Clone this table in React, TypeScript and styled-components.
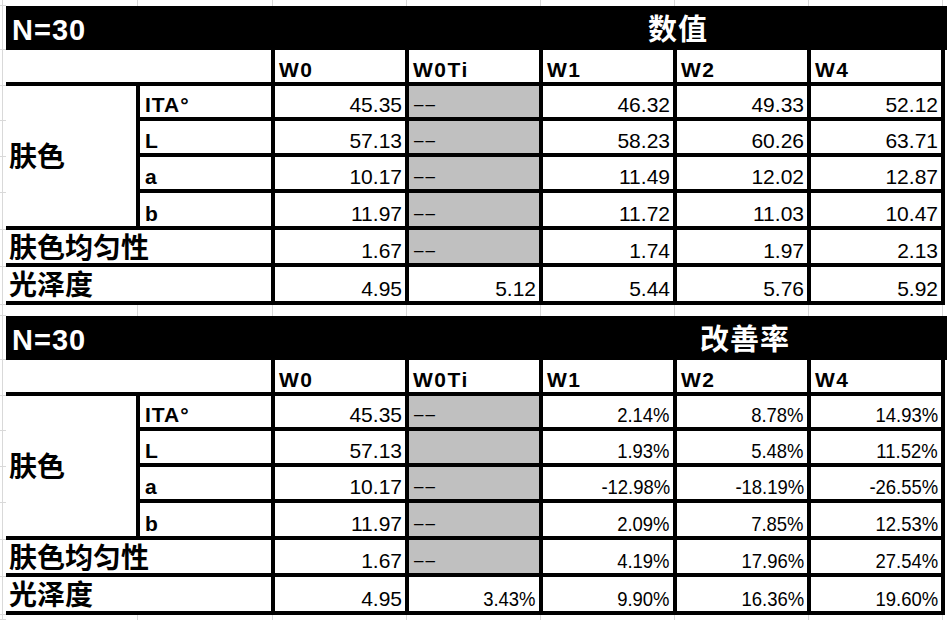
import React from 'react';
import styled, { createGlobalStyle } from 'styled-components';

const GlobalStyle = createGlobalStyle`
  *, *::before, *::after { box-sizing: border-box; }
  html, body { margin: 0; padding: 0; background: #ffffff; }
  body {
    font-family: "Liberation Sans", "Noto Sans CJK SC", sans-serif;
    color: #000000;
  }
`;

const COLS = '6px 134px 135px 134px 134px 134px 134px 134px 2px';
const GRID = '#d9d9d9';
const LINE = '4px solid #000000';

const Page = styled.div`
  width: 947px;
  height: 620px;
  overflow: hidden;
  display: flex;
  flex-direction: column;
  background: #ffffff;
`;

const Strip = styled.div<{ $h: number }>`
  display: grid;
  grid-template-columns: ${COLS};
  height: ${(p) => p.$h}px;
  flex: none;
`;

const StripCell = styled.div`
  background: linear-gradient(
    to left,
    transparent 2px,
    ${GRID} 2px,
    ${GRID} 3px,
    transparent 3px
  );
`;

const Gutter = styled.div`
  background: linear-gradient(
    to right,
    transparent 2px,
    ${GRID} 2px,
    ${GRID} 3px,
    transparent 3px
  );
  box-shadow: inset 0 -1px 0 ${GRID};
`;

const EndCell = styled.div`
  background: #ffffff;
`;

const Sheet = styled.div`
  display: grid;
  grid-template-columns: ${COLS};
  grid-template-rows: 44px 36px 35px 36px 36px 37px 37px 38px;
  flex: none;
`;

const TitleCell = styled.div<{ $span: number; $center?: boolean }>`
  grid-column: span ${(p) => p.$span};
  display: flex;
  align-items: center;
  justify-content: ${(p) => (p.$center ? 'center' : 'flex-start')};
  padding: 5px 0 0 ${(p) => (p.$center ? '0' : '6px')};
  background: #000000;
  color: #ffffff;
  font-family: "Liberation Sans", "Noto Sans CJK SC", sans-serif;
  font-weight: 700;
  font-size: 29px;
  line-height: 1.2;
  letter-spacing: 1px;
  white-space: nowrap;
`;

const HeadBlank = styled.div`
  grid-column: span 2;
  border-right: ${LINE};
  border-bottom: ${LINE};
`;

const HeadCell = styled.div`
  display: flex;
  align-items: flex-end;
  padding-left: 4px;
  border-right: ${LINE};
  border-bottom: ${LINE};
  font-weight: 700;
  font-size: 21px;
  line-height: 24px;
  letter-spacing: 1.5px;
  white-space: nowrap;
`;

const GroupLabel = styled.div<{ $rows: number }>`
  grid-row: span ${(p) => p.$rows};
  display: flex;
  align-items: center;
  padding-left: 3px;
  border-right: ${LINE};
  border-bottom: ${LINE};
  font-family: "Noto Sans CJK SC", sans-serif;
  font-weight: 700;
  font-size: 28px;
  line-height: 1.2;
`;

const RowLabel = styled.div`
  grid-column: span 2;
  display: flex;
  align-items: center;
  padding-left: 3px;
  border-right: ${LINE};
  border-bottom: ${LINE};
  font-family: "Noto Sans CJK SC", sans-serif;
  font-weight: 700;
  font-size: 28px;
  line-height: 1.2;
  white-space: nowrap;
`;

const SubLabel = styled.div`
  display: flex;
  align-items: flex-end;
  padding-left: 5px;
  border-right: ${LINE};
  border-bottom: ${LINE};
  font-weight: 700;
  font-size: 21px;
  line-height: 24px;
  letter-spacing: 1px;
  white-space: nowrap;
`;

const Value = styled.div<{ $shade?: boolean }>`
  display: flex;
  align-items: flex-end;
  justify-content: ${(p) => (p.$shade ? 'flex-start' : 'flex-end')};
  padding: 0 3px 0 5px;
  background: ${(p) => (p.$shade ? '#c0c0c0' : '#ffffff')};
  border-right: ${LINE};
  border-bottom: ${LINE};
  font-size: 21px;
  line-height: 24px;
  white-space: nowrap;
  min-width: 0;
`;

const Dash = styled.span`
  font-size: 17px;
  line-height: 24px;
  letter-spacing: 2px;
`;

const Pct = styled.span`
  display: inline-block;
  transform: scaleX(0.88);
  transform-origin: right center;
`;

type Cell = string | { shade: true; dash: boolean };

interface Row {
  label: string;
  group?: boolean;
  cells: Cell[];
}

const G = (dash = true): Cell => ({ shade: true, dash });

const valuesRows: Row[] = [
  { label: 'ITA°', group: true, cells: ['45.35', G(), '46.32', '49.33', '52.12'] },
  { label: 'L', group: true, cells: ['57.13', G(), '58.23', '60.26', '63.71'] },
  { label: 'a', group: true, cells: ['10.17', G(), '11.49', '12.02', '12.87'] },
  { label: 'b', group: true, cells: ['11.97', G(), '11.72', '11.03', '10.47'] },
  { label: '肤色均匀性', cells: ['1.67', G(), '1.74', '1.97', '2.13'] },
  { label: '光泽度', cells: ['4.95', '5.12', '5.44', '5.76', '5.92'] },
];

const rateRows: Row[] = [
  { label: 'ITA°', group: true, cells: ['45.35', G(), '2.14%', '8.78%', '14.93%'] },
  { label: 'L', group: true, cells: ['57.13', G(false), '1.93%', '5.48%', '11.52%'] },
  { label: 'a', group: true, cells: ['10.17', G(), '-12.98%', '-18.19%', '-26.55%'] },
  { label: 'b', group: true, cells: ['11.97', G(), '2.09%', '7.85%', '12.53%'] },
  { label: '肤色均匀性', cells: ['1.67', G(), '4.19%', '17.96%', '27.54%'] },
  { label: '光泽度', cells: ['4.95', '3.43%', '9.90%', '16.36%', '19.60%'] },
];

const HEADS = ['W0', 'W0Ti', 'W1', 'W2', 'W4'];

function renderCell(c: Cell, key: number) {
  if (typeof c === 'string') {
    return (
      <Value key={key}>
        {c.endsWith('%') ? <Pct>{c}</Pct> : c}
      </Value>
    );
  }
  return <Value key={key} $shade>{c.dash ? <Dash>––</Dash> : null}</Value>;
}

function GridStrip({ h }: { h: number }) {
  return (
    <Strip $h={h}>
      <Gutter />
      {Array.from({ length: 7 }).map((_, i) => (
        <StripCell key={i} />
      ))}
      <EndCell />
    </Strip>
  );
}

function DataTable({ title, split, rows }: { title: string; split: number; rows: Row[] }) {
  const groupCount = rows.filter((r) => r.group).length;
  return (
    <Sheet>
      <Gutter />
      <TitleCell $span={split}>N=30</TitleCell>
      <TitleCell $span={8 - split} $center>
        {title}
      </TitleCell>

      <Gutter />
      <HeadBlank />
      {HEADS.map((h) => (
        <HeadCell key={h}>{h}</HeadCell>
      ))}
      <EndCell />

      {rows.map((r, i) => (
        <React.Fragment key={r.label}>
          <Gutter />
          {r.group ? (
            <>
              {i === 0 && <GroupLabel $rows={groupCount}>肤色</GroupLabel>}
              <SubLabel>{r.label}</SubLabel>
            </>
          ) : (
            <RowLabel>{r.label}</RowLabel>
          )}
          {r.cells.map((c, j) => renderCell(c, j))}
          <EndCell />
        </React.Fragment>
      ))}
    </Sheet>
  );
}

export default function App() {
  return (
    <>
      <GlobalStyle />
      <Page>
        <GridStrip h={6} />
        <DataTable title="数值" split={3} rows={valuesRows} />
        <GridStrip h={11} />
        <DataTable title="改善率" split={4} rows={rateRows} />
        <GridStrip h={5} />
      </Page>
    </>
  );
}
